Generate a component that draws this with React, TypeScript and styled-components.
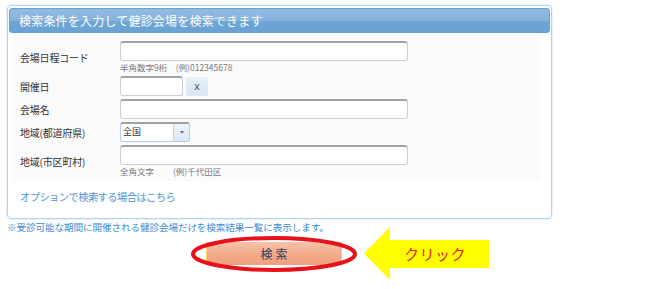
import React from "react";
import styled, { createGlobalStyle } from "styled-components";

const GlobalStyle = createGlobalStyle`
  html, body {
    margin: 0;
    padding: 0;
    background: #ffffff;
  }
  body {
    font-family: "Noto Sans CJK JP", "Noto Sans", sans-serif;
    color: #333333;
  }
`;

const Page = styled.div`
  padding: 5px 0 0 7px;
  width: 653px;
`;

const Panel = styled.section`
  width: 541px;
  border: 1px solid #b3d2ee;
  border-radius: 4px;
  padding: 2px 1px 0 1px;
  box-shadow: 0 0 0 1px #eef3f8;
`;

const Header = styled.h2`
  margin: 0;
  height: 25px;
  display: flex;
  align-items: center;
  padding-left: 9px;
  border-radius: 3px;
  border: 1px solid #6a9fd0;
  box-sizing: border-box;
  background: linear-gradient(#92bbe0 0%, #86b3dc 50%, #6da5d6 55%, #6aa2d4 100%);
  color: #ffffff;
  font-size: 12px;
  font-weight: normal;
  letter-spacing: 0.2px;
`;

const FieldArea = styled.div`
  margin: 3px 9px 0 4px;
  padding: 5px 0 4px 7px;
  background: #fbfbfc;
  display: flex;
  flex-direction: column;
  gap: 3px;
`;

const Field = styled.div`
  display: grid;
  grid-template-columns: 100px 1fr;
  align-items: center;
`;

const Label = styled.label`
  font-size: 10px;
  letter-spacing: -0.2px;
  color: #333333;
`;

const Control = styled.div`
  display: flex;
  flex-direction: column;
`;

const InputRow = styled.div`
  display: flex;
  align-items: center;
  gap: 3px;
`;

const TextBox = styled.div<{ $w: number }>`
  width: ${(p) => p.$w}px;
  height: 20px;
  box-sizing: border-box;
  border: 1px solid #c9cfd6;
  border-top: 2px solid #9ea3a8;
  border-radius: 3px;
  background: #ffffff;
`;

const ClearButton = styled.div`
  width: 22px;
  height: 19px;
  display: flex;
  align-items: center;
  justify-content: center;
  border-radius: 2px;
  background: linear-gradient(#e8f0f9, #d9e6f4);
  color: #4a5a73;
  font-size: 10px;
  font-family: "DejaVu Sans", sans-serif;
`;

const Hint = styled.div`
  font-size: 8.5px;
  line-height: 11px;
  color: #7a7a7a;
  margin-top: 1px;
  white-space: pre;
`;

const SelectBox = styled.div`
  width: 70px;
  height: 20px;
  box-sizing: border-box;
  display: flex;
  border: 1px solid #b9cde2;
  border-top: 2px solid #9ea3a8;
  border-radius: 3px;
  background: #ffffff;
  overflow: hidden;
`;

const SelectValue = styled.span`
  flex: 1;
  font-size: 9px;
  line-height: 16px;
  padding-left: 2px;
  color: #333333;
`;

const SelectArrow = styled.span`
  width: 15px;
  border-left: 1px solid #c6d7e9;
  background: linear-gradient(#eef4fb, #dbe8f5);
  display: flex;
  align-items: center;
  justify-content: center;
  &::after {
    content: "";
    border-left: 2px solid transparent;
    border-right: 2px solid transparent;
    border-top: 3px solid #5a7594;
  }
`;

const OptionLink = styled.a`
  display: block;
  margin: 9px 0 0 11px;
  padding-bottom: 14px;
  font-size: 10.3px;
  letter-spacing: -0.6px;
  line-height: 14px;
  color: #4f95d9;
  text-decoration: none;
`;

const Note = styled.p`
  margin: 1px 0 0 0;
  font-size: 9.6px;
  letter-spacing: -0.1px;
  line-height: 14px;
  color: #3d8bd6;
`;

const ButtonRow = styled.div`
  display: flex;
  align-items: center;
  margin: -7px 0 0 184px;
`;

const ButtonSpot = styled.div`
  position: relative;
  width: 166px;
  height: 36px;
  display: flex;
  align-items: center;
  justify-content: center;
`;

const SearchButton = styled.button`
  width: 136px;
  height: 23px;
  border: none;
  border-left: 1px solid #f3d46a;
  border-right: 1px solid #f3d46a;
  background: linear-gradient(#f6c3aa, #f2a887 60%, #f0a080);
  color: #2f3d5c;
  font-family: "Noto Sans CJK JP", sans-serif;
  font-size: 12px;
  letter-spacing: 3px;
  padding: 0 0 0 3px;
`;

const Ring = styled.svg`
  position: absolute;
  left: 0;
  top: 0;
  pointer-events: none;
`;

const Arrow = styled.div`
  display: flex;
  align-items: center;
  margin-left: 7px;
`;

const ArrowBody = styled.div`
  width: 99px;
  height: 28px;
  background: #ffff00;
  display: flex;
  align-items: center;
  padding-left: 14px;
  box-sizing: border-box;
  color: #e8201c;
  font-size: 15px;
  letter-spacing: 0.5px;
`;

export default function App() {
  return (
    <>
      <GlobalStyle />
      <Page>
        <Panel>
          <Header>検索条件を入力して健診会場を検索できます</Header>
          <FieldArea>
            <Field>
              <Label>会場日程コード</Label>
              <Control>
                <TextBox $w={288} />
                <Hint>半角数字9桁　(例)012345678</Hint>
              </Control>
            </Field>
            <Field>
              <Label>開催日</Label>
              <InputRow>
                <TextBox $w={63} />
                <ClearButton>x</ClearButton>
              </InputRow>
            </Field>
            <Field>
              <Label>会場名</Label>
              <TextBox $w={288} />
            </Field>
            <Field>
              <Label>地域(都道府県)</Label>
              <SelectBox>
                <SelectValue>全国</SelectValue>
                <SelectArrow />
              </SelectBox>
            </Field>
            <Field>
              <Label>地域(市区町村)</Label>
              <Control>
                <TextBox $w={288} />
                <Hint>全角文字　　 (例)千代田区</Hint>
              </Control>
            </Field>
          </FieldArea>
          <OptionLink href="#">オプションで検索する場合はこちら</OptionLink>
        </Panel>
        <Note>※受診可能な期間に開催される健診会場だけを検索結果一覧に表示します。</Note>
        <ButtonRow>
          <ButtonSpot>
            <SearchButton type="button">検索</SearchButton>
            <Ring width="166" height="36" viewBox="0 0 166 36">
              <ellipse cx="83" cy="18" rx="81" ry="16" fill="none" stroke="#e8101a" strokeWidth="4" />
            </Ring>
          </ButtonSpot>
          <Arrow>
            <svg width="26" height="53" viewBox="0 0 26 53">
              <polygon points="0,26.5 26,0 26,53" fill="#ffff00" />
            </svg>
            <ArrowBody>クリック</ArrowBody>
          </Arrow>
        </ButtonRow>
      </Page>
    </>
  );
}
